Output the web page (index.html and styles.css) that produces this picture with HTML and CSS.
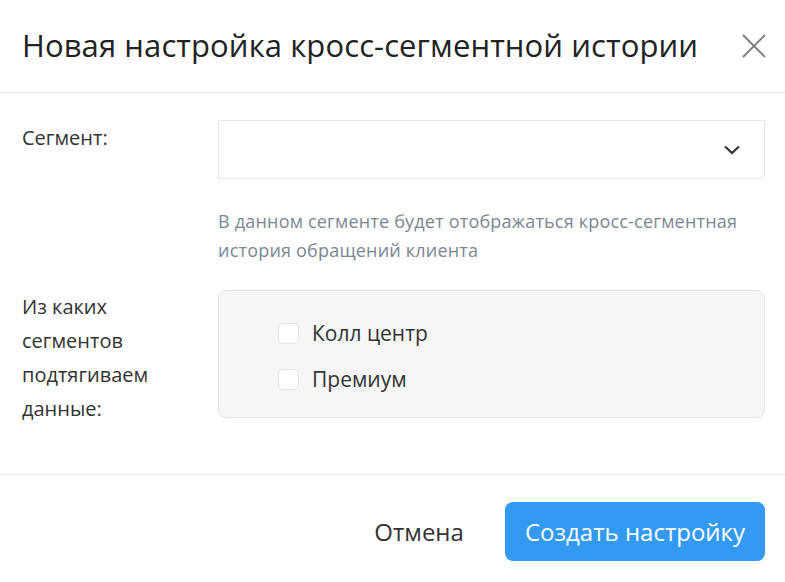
FILE: index.html
```html
<!DOCTYPE html>
<html lang="ru">

<head>
  <meta charset="UTF-8">
  <meta name="viewport" content="width=device-width, initial-scale=1.0">
  <title>Новая настройка</title>
  <link rel="stylesheet" href="styles.css">
</head>

<body>

  <div class="modal">
    <!-- Header -->
    <div class="modal-header">
      <h2>Новая настройка кросс-сегментной истории</h2>
      <button class="close-btn" aria-label="Закрыть">
        <svg width="24" height="24" viewBox="0 0 24 24">
          <path d="M1 1 L23 23 M23 1 L1 23" stroke="#7a7a7a" stroke-width="1.8" fill="none" />
        </svg>
      </button>
    </div>

    <!-- Body -->
    <div class="modal-body">
      <div class="form-row">
        <label class="form-label">Сегмент:</label>
        <div class="form-field">
          <div class="select">
            <svg class="chevron" width="18" height="10" viewBox="0 0 18 10">
              <path d="M2 1.5 L9 8 L16 1.5" stroke="#333" stroke-width="2.2" fill="none" />
            </svg>
          </div>
          <p class="hint">В данном сегменте будет отображаться кросс-сегментная история обращений клиента</p>
        </div>
      </div>

      <div class="form-row">
        <label class="form-label">Из каких сегментов подтягиваем данные:</label>
        <div class="form-field">
          <div class="check-panel">
            <label class="check"><span class="box"></span>Колл центр</label>
            <label class="check"><span class="box"></span>Премиум</label>
          </div>
        </div>
      </div>
    </div>

    <!-- Footer -->
    <div class="modal-footer">
      <button class="btn-cancel">Отмена</button>
      <button class="btn-primary">Создать настройку</button>
    </div>
  </div>

</body>

</html>
```

FILE: styles.css
```css
body {
  font-family: "Open Sans", "Noto Sans", sans-serif;
  margin: 0;
  padding: 0;
  background: #fff;
  color: #333;
}

.modal {
  width: 785px;
}

/* Header */
.modal-header {
  height: 93px;
  display: flex;
  align-items: center;
  justify-content: space-between;
  padding: 0 19px 0 22px;
  border-bottom: 1px solid #e9e9e9;
  box-sizing: border-box;
}

.modal-header h2 {
  margin: 0 0 2px;
  font-size: 31px;
  font-weight: 500;
  color: #222;
  letter-spacing: 0.1px;
}

.close-btn {
  background: none;
  border: none;
  padding: 0;
  width: 24px;
  height: 24px;
  cursor: pointer;
}

/* Body */
.modal-body {
  padding: 27px 20px 48px 22px;
  display: flex;
  flex-direction: column;
  gap: 25px;
}

.form-row {
  display: flex;
}

.form-label {
  width: 196px;
  flex-shrink: 0;
  font-size: 20px;
  line-height: 34px;
  color: #333;
  padding-right: 40px;
  box-sizing: border-box;
}

.form-row:first-child .form-label {
  line-height: 36px;
}

.form-field {
  flex: 1;
}

.select {
  height: 59px;
  border: 1px solid #e6e6e6;
  border-radius: 2px;
  display: flex;
  align-items: center;
  justify-content: flex-end;
  padding-right: 23px;
  box-sizing: border-box;
}

.hint {
  margin: 28px 0 0;
  font-size: 18px;
  line-height: 29px;
  letter-spacing: 0.2px;
  color: #7b8794;
}

/* Checkbox panel */
.check-panel {
  height: 128px;
  background: #f6f6f6;
  border: 1px solid #e4e4e4;
  border-radius: 8px;
  padding: 26px 59px 0;
  box-sizing: border-box;
  display: flex;
  flex-direction: column;
  gap: 14px;
}

.check {
  display: flex;
  align-items: center;
  gap: 13px;
  font-size: 21px;
  line-height: 32px;
  color: #333;
}

.box {
  width: 21px;
  height: 21px;
  background: #fff;
  border: 1px solid #e0e3e8;
  border-radius: 5px;
  box-sizing: border-box;
}

/* Footer */
.modal-footer {
  border-top: 1px solid #e9e9e9;
  padding: 27px 20px 20px;
  display: flex;
  justify-content: flex-end;
  align-items: center;
  gap: 41px;
}

.btn-cancel {
  background: none;
  border: none;
  font-family: inherit;
  font-size: 24px;
  color: #333;
  padding: 0;
}

.btn-primary {
  height: 59px;
  padding: 0 20px;
  background: #3399f3;
  color: #fff;
  border: none;
  border-radius: 8px;
  font-family: inherit;
  font-size: 24px;
  cursor: pointer;
}
```
